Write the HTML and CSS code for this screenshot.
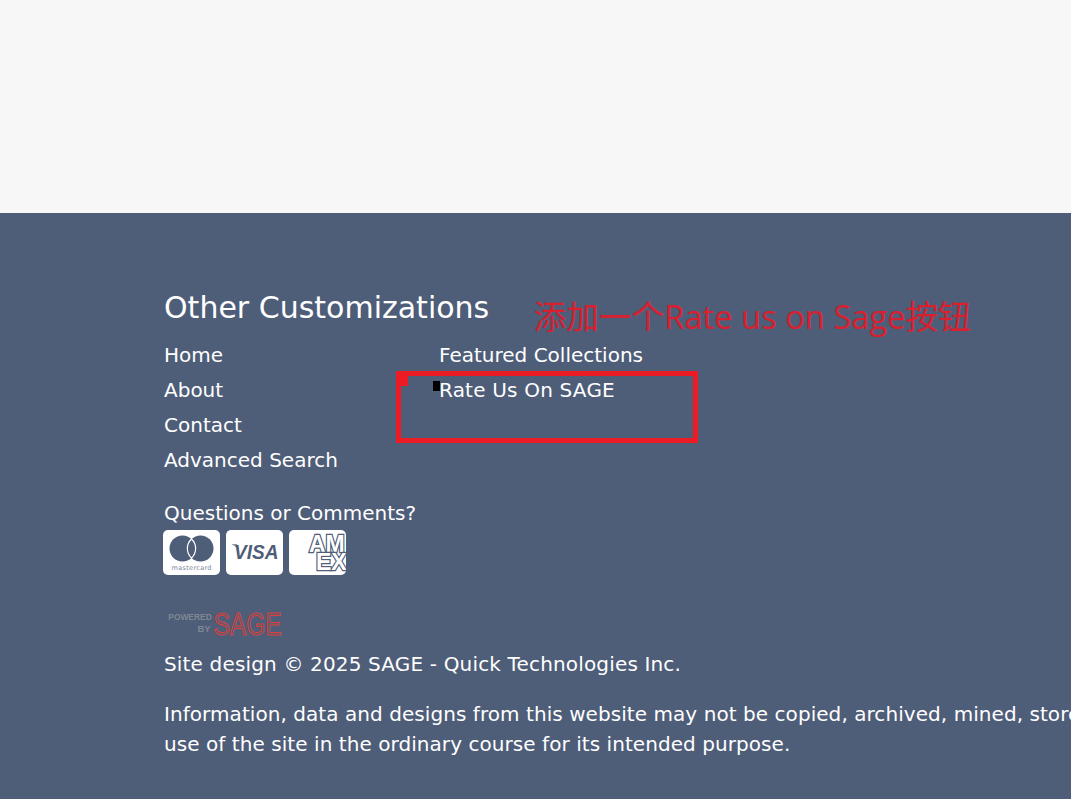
FILE: index.html
```html
<!DOCTYPE html>
<html lang="en">
  <head>
    <meta charset="UTF-8" />
    <title>Other Customizations</title>
    <link rel="stylesheet" href="styles.css">
  </head>
  <body>
    <div class="page-top"></div>
    <footer class="site-footer">
      <h2 class="footer-title">Other Customizations</h2>
      <div class="footer-links">
        <ul class="link-col">
          <li><a href="#">Home</a></li>
          <li><a href="#">About</a></li>
          <li><a href="#">Contact</a></li>
          <li><a href="#">Advanced Search</a></li>
        </ul>
        <ul class="link-col">
          <li><a href="#">Featured Collections</a></li>
          <li><a class="rate-link" href="#">Rate Us On SAGE</a></li>
        </ul>
      </div>
      <p class="questions">Questions or Comments?</p>
      <div class="cards">
        <svg class="card" viewBox="0 0 57 45">
          <circle cx="19.5" cy="18.5" r="13" fill="#4e5d78"/>
          <circle cx="37.5" cy="18.5" r="13" fill="#4e5d78"/>
          <path d="M28.5 9a13 13 0 0 1 0 19a13 13 0 0 1 0-19z" fill="#4e5d78" stroke="#fff" stroke-width="1.2"/>
          <text x="8.5" y="39.5" class="mc-text" textLength="40">mastercard</text>
        </svg>
        <svg class="card" viewBox="0 0 57 45">
          <path d="M5.5 14h5.5l1.5 5z" fill="#8d97a9"/>
          <text x="8" y="29.3" class="visa-text" textLength="44.5" lengthAdjust="spacingAndGlyphs">VISA</text>
        </svg>
        <svg class="card" viewBox="0 0 57 45">
          <text x="20" y="22" class="amex-text">AM</text>
          <text x="27" y="40" class="amex-text">EX</text>
        </svg>
      </div>
      <svg class="powered" viewBox="0 0 119 28">
        <text x="48.7" y="12" class="powered-text" text-anchor="end" textLength="43.4" lengthAdjust="spacingAndGlyphs">POWERED</text>
        <text x="47.7" y="24" class="powered-text" text-anchor="end">BY</text>
        <text x="50.5" y="26.5" class="sage-text" textLength="68" lengthAdjust="spacingAndGlyphs">SAGE</text>
      </svg>
      <p class="copyright">Site design © 2025 SAGE - Quick Technologies Inc.</p>
      <p class="legal">Information, data and designs from this website may not be copied, archived, mined, stored, captured, harvested or used in any way except in connection with<br>use of the site in the ordinary course for its intended purpose.</p>
    </footer>

    <div class="note-text">添加一个Rate us on Sage按钮</div>
    <div class="note-box"></div>
    <div class="note-handle"></div>
    <div class="note-cursor"></div>
  </body>
</html>
```

FILE: styles.css
```css
* {
  box-sizing: border-box;
  margin: 0;
  padding: 0;
}
html, body {
  height: 799px;
  overflow: hidden;
}
body {
  background: #f7f7f7;
  font-family: "DejaVu Sans", Verdana, sans-serif;
  color: #fff;
}
.page-top {
  height: 213px;
}
.site-footer {
  height: 586px;
  background: #4e5d78;
  padding: 76px 0 0 164px;
  white-space: nowrap;
  overflow: hidden;
}
.footer-title {
  font-size: 30px;
  font-weight: 400;
  line-height: 38px;
  margin-bottom: 11px;
}
.footer-links {
  display: grid;
  grid-template-columns: 275px 1fr;
}
.link-col {
  list-style: none;
}
.link-col li {
  font-size: 20px;
  line-height: 35px;
}
.link-col a {
  color: #fff;
  text-decoration: none;
}
.link-col .rate-link {
  letter-spacing: 0.2px;
}
.questions {
  font-size: 20px;
  line-height: 30px;
  margin-top: 20px;
}
.cards {
  display: flex;
  gap: 6px;
  margin: 2px 0 0 -1px;
}
.card {
  width: 57px;
  height: 45px;
  background: #fff;
  border-radius: 5px;
}
.mc-text {
  font: 6.5px "DejaVu Sans", sans-serif;
  fill: #7c879b;
}
.visa-text {
  font: italic 700 21px "Liberation Sans", sans-serif;
  fill: #4e5d78;
}
.amex-text {
  font: 700 23px "Liberation Sans", sans-serif;
  fill: #fff;
  stroke: #4e5d78;
  stroke-width: 2.4px;
  paint-order: stroke;
}
.powered {
  display: block;
  width: 119px;
  height: 28px;
  margin: 33px 0 0 -1px;
}
.powered-text {
  font: 700 9.5px "Liberation Sans", sans-serif;
  fill: #7f8794;
}
.sage-text {
  font: 400 32px "Liberation Sans", sans-serif;
  fill: none;
  stroke: #d5423f;
  stroke-width: 1.2px;
}
.copyright {
  font-size: 20px;
  line-height: 30px;
  letter-spacing: 0.16px;
  margin-top: 13px;
}
.legal {
  font-size: 20px;
  line-height: 30px;
  letter-spacing: 0.06px;
  margin-top: 20px;
}

/* red markup drawn over the screenshot */
.note-text {
  position: absolute;
  left: 533.5px;
  top: 294px;
  font: 400 32.7px/46px "Open Sans", "Noto Sans CJK SC", sans-serif;
  color: #d9202e;
  white-space: nowrap;
}
.note-box {
  position: absolute;
  left: 396px;
  top: 371px;
  width: 302px;
  height: 72px;
  border: 5px solid #ed1c24;
}
.note-handle {
  position: absolute;
  left: 396px;
  top: 372px;
  width: 12px;
  height: 14px;
  background: #ed1c24;
}
.note-cursor {
  position: absolute;
  left: 433px;
  top: 381px;
  width: 7px;
  height: 10px;
  background: #000;
}
```
